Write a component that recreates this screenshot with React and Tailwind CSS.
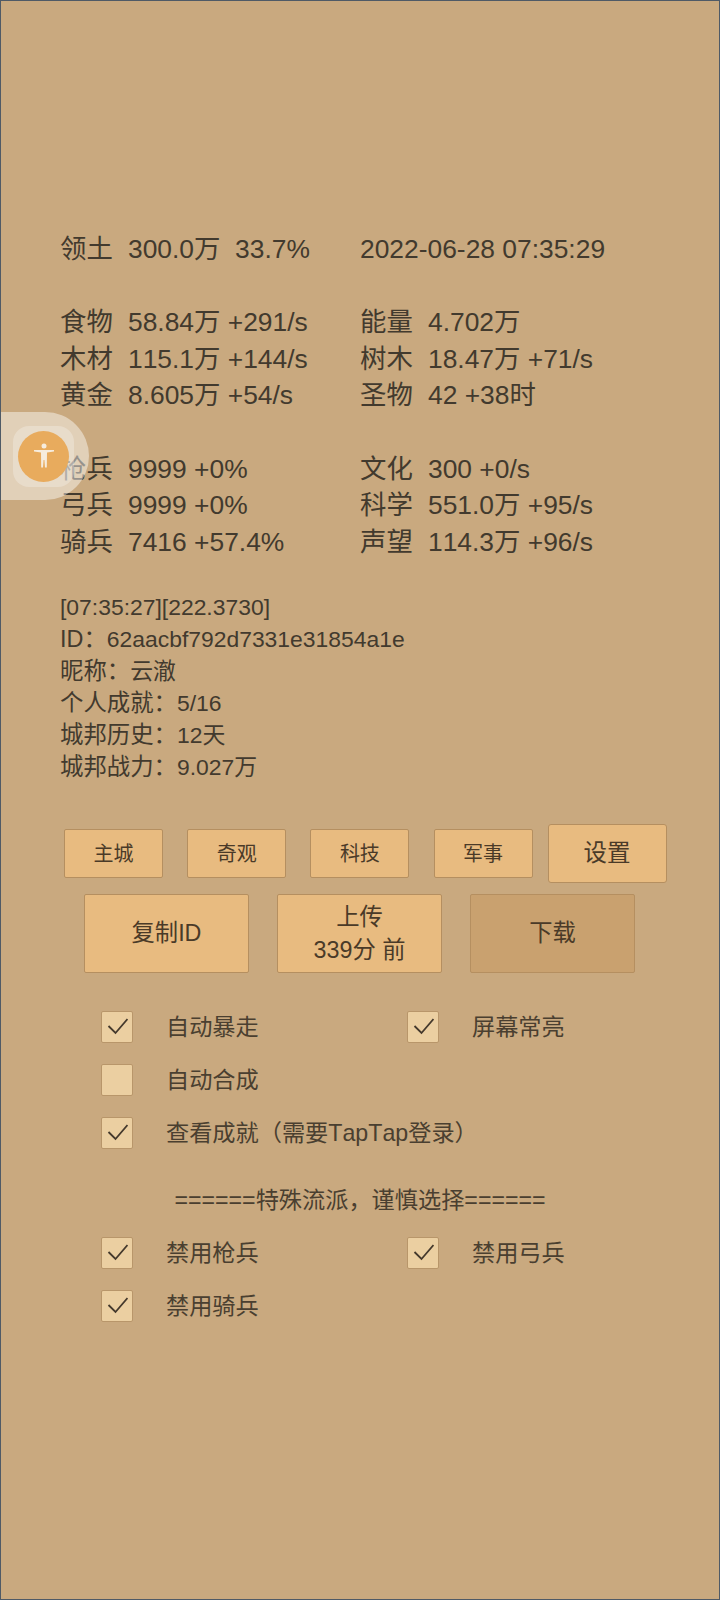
import React from "react";

function Cell({ label, value }) {
  return (
    <div className="flex h-[36.7px] items-center whitespace-pre">
      <span className="w-[68px]">{label}</span>
      <span>{value}</span>
    </div>
  );
}

function Stats({ rows }) {
  return (
    <div className="grid grid-cols-[300px_300px]">
      {rows.map((r, i) => (
        <Cell key={i} label={r[0]} value={r[1]} />
      ))}
    </div>
  );
}

function Info({ label, value }) {
  return (
    <div>
      <span className="text-[23.4px]">{label}</span>
      <span className="text-[22.9px]">{value}</span>
    </div>
  );
}

function Check({ on, label, className = "" }) {
  return (
    <div className={"flex h-[32px] items-center " + className}>
      <div className="flex h-[32px] w-[32px] items-center justify-center rounded-[2px] border border-[#b8966a] bg-[#ebcfa1]">
        {on && (
          <svg width="22" height="22" viewBox="0 0 22 22" fill="none" stroke="#44392c" strokeWidth="1.8">
            <path d="M2.5 10 L9.5 17 L21.5 3" />
          </svg>
        )}
      </div>
      <span className="ml-[33px] text-[23.2px] whitespace-nowrap">{label}</span>
    </div>
  );
}

function SmallBtn({ children }) {
  return (
    <div className="flex h-[49px] w-[99px] items-center justify-center rounded-[2px] border border-[#b58f60] bg-[#e8bb80] text-[20px] text-[#4a3a28]">
      {children}
    </div>
  );
}

function BigBtn({ children, dark }) {
  return (
    <div
      className={
        "flex h-[79px] w-[165px] flex-col items-center justify-center rounded-[2px] border border-[#b58f60] text-[23.3px] leading-[32.6px] text-[#4a3a28] " +
        (dark ? "bg-[#c9a16f]" : "bg-[#e8bb80]")
      }
    >
      {children}
    </div>
  );
}

export default function App() {
  return (
    <div className="relative h-[1600px] w-[720px] overflow-hidden border border-[#4f5a66] bg-[#c9a97f] font-['Liberation_Sans','Noto_Sans_CJK_SC',sans-serif] text-[26.4px] text-[#423a2e] [font-kerning:none] [text-spacing-trim:space-all]">
      <div className="pl-[59px] pt-[230px]">
        <Stats rows={[["领土", "300.0万  33.7%"]]} />
        <div className="absolute left-[359px] top-[230px] flex h-[36.7px] items-center">2022-06-28 07:35:29</div>
        <div className="mt-[36.7px]">
          <Stats
            rows={[
              ["食物", "58.84万 +291/s"],
              ["能量", "4.702万"],
              ["木材", "115.1万 +144/s"],
              ["树木", "18.47万 +71/s"],
              ["黄金", "8.605万 +54/s"],
              ["圣物", "42 +38时"],
            ]}
          />
        </div>
        <div className="mt-[36.7px]">
          <Stats
            rows={[
              ["枪兵", "9999 +0%"],
              ["文化", "300 +0/s"],
              ["弓兵", "9999 +0%"],
              ["科学", "551.0万 +95/s"],
              ["骑兵", "7416 +57.4%"],
              ["声望", "114.3万 +96/s"],
            ]}
          />
        </div>
        <div className="mt-[30px] text-[22.9px] leading-[32px]">
          <div>[07:35:27][222.3730]</div>
          <Info label="ID：" value="62aacbf792d7331e31854a1e" />
          <Info label="昵称：" value="云澈" />
          <Info label="个人成就：" value="5/16" />
          <Info label="城邦历史：" value="12天" />
          <Info label="城邦战力：" value="9.027万" />
        </div>
      </div>

      <div className="mt-[41px] flex items-center pl-[63px]">
        <div className="flex gap-[24.2px]">
          <SmallBtn>主城</SmallBtn>
          <SmallBtn>奇观</SmallBtn>
          <SmallBtn>科技</SmallBtn>
          <SmallBtn>军事</SmallBtn>
        </div>
        <div className="ml-[15px] flex h-[59px] w-[119px] items-center justify-center rounded-[3px] border border-[#b58f60] bg-[#e8bb80] text-[23.5px] text-[#4a3a28]">
          设置
        </div>
      </div>

      <div className="mt-[11px] flex gap-[28px] pl-[83px]">
        <BigBtn>复制ID</BigBtn>
        <BigBtn>
          <span>上传</span>
          <span>339分 前</span>
        </BigBtn>
        <BigBtn dark>下载</BigBtn>
      </div>

      <div className="mt-[38px] flex flex-col gap-[21px] pl-[100px] text-[#4a3f30]">
        <div className="flex">
          <Check on label="自动暴走" className="w-[306px]" />
          <Check on label="屏幕常亮" />
        </div>
        <Check label="自动合成" />
        <Check on label="查看成就（需要TapTap登录）" />
      </div>

      <div className="mt-[35px] text-center text-[23.2px] leading-[32px] text-[#4a3f30]">======特殊流派，谨慎选择======</div>

      <div className="mt-[21px] flex flex-col gap-[21px] pl-[100px] text-[#4a3f30]">
        <div className="flex">
          <Check on label="禁用枪兵" className="w-[306px]" />
          <Check on label="禁用弓兵" />
        </div>
        <Check on label="禁用骑兵" />
      </div>

      <div className="absolute left-[-1px] top-[411px] flex h-[88px] w-[89px] items-center rounded-r-[44px] bg-[#ffffff]/45">
        <div className="ml-[13px] flex h-[61px] w-[61px] items-center justify-center rounded-[16px] bg-[#ffffff]/25">
          <div className="flex h-[51px] w-[51px] items-center justify-center rounded-full bg-[#e8ab5d]">
            <svg width="22" height="26" viewBox="0 0 22 26" fill="#f6ecdd">
              <circle cx="11" cy="3" r="2.5" />
              <path d="M1 7 L21 7 L21 8.5 L14 9.5 L13.8 24.5 L12 24.5 L11.4 17 L10.6 17 L10 24.5 L8.2 24.5 L8 9.5 L1 8.5 Z" />
            </svg>
          </div>
        </div>
      </div>
    </div>
  );
}
